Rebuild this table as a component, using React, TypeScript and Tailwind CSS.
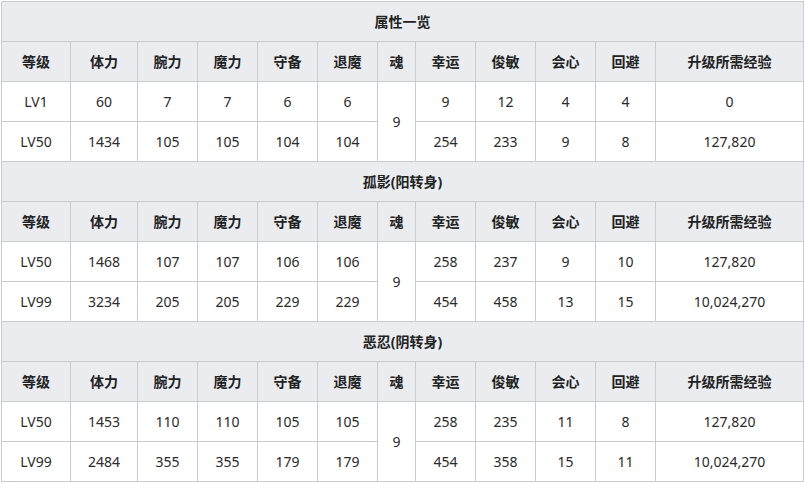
import { Fragment } from "react";

const headers = ["等级", "体力", "腕力", "魔力", "守备", "退魔", "魂", "幸运", "俊敏", "会心", "回避", "升级所需经验"];
const widths = [70, 67, 60, 60, 60, 60, 38, 60, 60, 60, 60, 148];

type Section = {
  title: string;
  soul: string;
  rows: string[][];
};

// each row: 等级..退魔, then 幸运..经验 (魂 is merged)
const sections: Section[] = [
  {
    title: "属性一览",
    soul: "9",
    rows: [
      ["LV1", "60", "7", "7", "6", "6", "9", "12", "4", "4", "0"],
      ["LV50", "1434", "105", "105", "104", "104", "254", "233", "9", "8", "127,820"],
    ],
  },
  {
    title: "孤影(阳转身)",
    soul: "9",
    rows: [
      ["LV50", "1468", "107", "107", "106", "106", "258", "237", "9", "10", "127,820"],
      ["LV99", "3234", "205", "205", "229", "229", "454", "458", "13", "15", "10,024,270"],
    ],
  },
  {
    title: "恶忍(阴转身)",
    soul: "9",
    rows: [
      ["LV50", "1453", "110", "110", "105", "105", "258", "235", "11", "8", "127,820"],
      ["LV99", "2484", "355", "355", "179", "179", "454", "358", "15", "11", "10,024,270"],
    ],
  },
];

const cell = "h-10 p-0 border-r border-b border-[#c8ccd1] text-center align-middle";
const headCell = `${cell} bg-[#eaecf0] font-bold text-[#222]`;

export default function App() {
  return (
    <div className="min-h-[483px] bg-white pl-px pt-px font-['Noto_Sans','Noto_Sans_CJK_SC',sans-serif] text-[14px] text-[#2a2a2a]">
      <table className="table-fixed w-[803px] border-separate border-spacing-0 border-l border-t border-[#c8ccd1]">
        <colgroup>
          {widths.map((w, i) => (
            <col key={i} style={{ width: i === 0 ? w - 1 : w }} />
          ))}
        </colgroup>
        <tbody>
          {sections.map((s) => (
            <Fragment key={s.title}>
              <tr>
                <th colSpan={12} className={headCell}>
                  {s.title}
                </th>
              </tr>
              <tr>
                {headers.map((h) => (
                  <th key={h} className={headCell}>
                    {h}
                  </th>
                ))}
              </tr>
              {s.rows.map((r, ri) => (
                <tr key={ri}>
                  {r.slice(0, 6).map((v, i) => (
                    <td key={i} className={cell}>
                      {v}
                    </td>
                  ))}
                  {ri === 0 && (
                    <td rowSpan={2} className={cell}>
                      {s.soul}
                    </td>
                  )}
                  {r.slice(6).map((v, i) => (
                    <td key={i + 7} className={cell}>
                      {v}
                    </td>
                  ))}
                </tr>
              ))}
            </Fragment>
          ))}
        </tbody>
      </table>
    </div>
  );
}
